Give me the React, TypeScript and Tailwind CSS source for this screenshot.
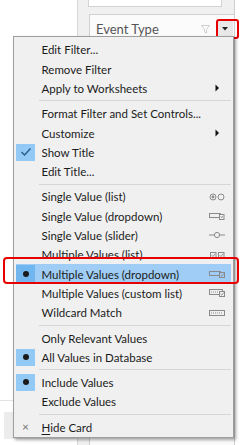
import React from "react";

const G = "#8a8a8a";

function IconSingleList() {
  return (
    <svg width="16" height="10" viewBox="0 0 16 10">
      <circle cx="4" cy="5" r="3" fill="none" stroke={G} strokeWidth="1" />
      <circle cx="4" cy="5" r="1.4" fill={G} />
      <circle cx="12" cy="5" r="3" fill="none" stroke={G} strokeWidth="1" />
    </svg>
  );
}
function IconSingleDropdown() {
  return (
    <svg width="16" height="10" viewBox="0 0 16 10">
      <rect x="0.5" y="2.5" width="11" height="4" fill="none" stroke={G} />
      <rect x="10.5" y="3.5" width="4.5" height="5" fill="#f0f0f0" stroke={G} />
      <path d="M11.8 5.2 L12.8 6.8 L13.8 5.2" fill="none" stroke={G} strokeWidth="0.8" />
    </svg>
  );
}
function IconSlider() {
  return (
    <svg width="16" height="10" viewBox="0 0 16 10">
      <line x1="0" y1="5" x2="16" y2="5" stroke={G} />
      <circle cx="8" cy="5" r="2.6" fill="#f0f0f0" stroke={G} />
    </svg>
  );
}
function IconMultiList() {
  return (
    <svg width="16" height="10" viewBox="0 0 16 10">
      <rect x="1.5" y="2.5" width="5.5" height="5.5" fill="none" stroke={G} />
      <path d="M2.8 5.2 L4 6.5 L6 3.8" fill="none" stroke={G} strokeWidth="0.9" />
      <rect x="9.5" y="2.5" width="5.5" height="5.5" fill="none" stroke={G} />
      <path d="M10.8 5.2 L12 6.5 L14 3.8" fill="none" stroke={G} strokeWidth="0.9" />
    </svg>
  );
}
function IconMultiDropdown({ bg = "#f0f0f0" }: { bg?: string }) {
  return (
    <svg width="16" height="10" viewBox="0 0 16 10">
      <rect x="0.5" y="2.5" width="11" height="4" fill="none" stroke={G} />
      <rect x="10.5" y="3.5" width="5" height="5" fill={bg} stroke={G} />
      <path d="M11.6 6 L12.8 7.2 L14.6 4.6" fill="none" stroke={G} strokeWidth="0.9" />
    </svg>
  );
}
function IconCustomList() {
  return (
    <svg width="16" height="10" viewBox="0 0 16 10">
      <rect x="0.5" y="1.5" width="13" height="5" fill="none" stroke={G} />
      <line x1="2" y1="4" x2="10" y2="4" stroke={G} strokeDasharray="1 1" />
      <rect x="10.5" y="3.5" width="5" height="5" fill="#f0f0f0" stroke={G} />
      <path d="M11.6 6 L12.8 7.2 L14.6 4.6" fill="none" stroke={G} strokeWidth="0.9" />
    </svg>
  );
}
function IconWildcard() {
  return (
    <svg width="16" height="10" viewBox="0 0 16 10">
      <rect x="0.5" y="2.5" width="15" height="5" fill="none" stroke={G} />
      <line x1="2" y1="5" x2="13" y2="5" stroke={G} strokeDasharray="1 1" />
    </svg>
  );
}
function Arrow() {
  return (
    <svg width="5" height="8" viewBox="0 0 5 8">
      <path d="M0.5 0.5 L4 4 L0.5 7.5 Z" fill="#111" />
    </svg>
  );
}

type Lead = "none" | "check" | "dot" | "x";

function Row({
  label,
  lead = "none",
  sel = false,
  right,
  highlight = false,
}: {
  label: React.ReactNode;
  lead?: Lead;
  sel?: boolean;
  right?: React.ReactNode;
  highlight?: boolean;
}) {
  return (
    <div
      className={`flex items-center h-[19.3px] ${highlight ? "bg-[#9fcdf5]" : ""}`}
    >
      <div className="w-[19px] h-full flex items-center justify-center shrink-0">
        <div
          className={`w-[19px] h-[17px] flex items-center justify-center ${
            highlight ? "bg-[#72b6f0]" : sel ? "bg-[#93c9f5]" : ""
          }`}
        >
          {lead === "dot" && <div className="w-[6px] h-[6px] rounded-full bg-[#1a1a1a]" />}
          {lead === "check" && (
            <svg width="12" height="10" viewBox="0 0 12 10">
              <path d="M1.5 5 L4.5 8 L10.5 1.5" fill="none" stroke="#2b5c8a" strokeWidth="1.4" />
            </svg>
          )}
          {lead === "x" && <span className="text-[12px] text-[#707070] leading-none">×</span>}
        </div>
      </div>
      <div className="ml-[6.5px] pt-[1px] flex-1 text-[11.5px] text-[#1b1b1b] leading-none whitespace-nowrap">
        {label}
      </div>
      <div className="w-[16px] mr-[6px] flex items-center justify-center">{right}</div>
    </div>
  );
}

function Sep() {
  return (
    <div className="h-[6px] flex items-center">
      <div className="ml-[23px] flex-1 h-px bg-[#d6d6d6]" />
    </div>
  );
}

export default function App() {
  return (
    <div
      className="relative w-[242px] h-[445px] overflow-hidden bg-white"
      style={{ fontFamily: 'Lato, "Noto Sans", sans-serif' }}
    >
      {/* background */}
      <div className="flex h-full">
        <div className="w-[77px] flex flex-col">
          <div className="h-[400px]" />
          <div className="h-px bg-[#e2e2e2]" />
          <div className="h-[11px]" />
          <div className="ml-[4px] h-[27px] bg-[#ececec]" />
        </div>
        <div className="w-px bg-[#d8d8d8]" />
        <div className="w-[157px] bg-[#f0f0f0] flex flex-col border-r border-[#cfcfcf]">
          <div className="ml-[10px] w-[134px] h-[7px] bg-white border-x border-b border-[#d2d2d2]" />
          <div className="h-[7px]" />
          <div className="ml-[11px] flex-1 bg-[#fbfbfb] border-t border-l border-[#d0d0d0]">
            <div className="flex items-center h-[28px] pl-[6px]">
              <span className="text-[13px] text-[#555] leading-none">Event Type</span>
              <div className="flex-1" />
              <svg width="9" height="9" viewBox="0 0 9 9" className="mr-[6px]">
                <path d="M0.5 0.5 H8.5 L5.5 4.5 V8 L3.5 7 V4.5 Z" fill="none" stroke="#c8c8c8" strokeWidth="0.9" />
              </svg>
              <div className="w-[17px] h-[16px] bg-[#e8e8e8] flex items-center justify-center mr-[1px]">
                <svg width="6" height="4" viewBox="0 0 6 4">
                  <path d="M0 0 H6 L3 3.5 Z" fill="#222" />
                </svg>
              </div>
            </div>
          </div>
        </div>
        <div className="flex-1 bg-white" />
      </div>

      {/* red box around dropdown button */}
      <div className="absolute left-[216px] top-[19px] w-[23px] h-[20px] border-2 border-[#e60000] rounded-[3px]" />

      {/* menu */}
      <div className="absolute left-[13px] top-[36px] w-[221px] h-[402px] bg-[#f0f0f0] border border-[#9e9e9e] shadow-[2px_2px_3px_rgba(0,0,0,0.35)] pt-[3px] px-[2px]">
        <Row label="Edit Filter..." />
        <Row label="Remove Filter" />
        <Row label="Apply to Worksheets" right={<Arrow />} />
        <Sep />
        <Row label="Format Filter and Set Controls..." />
        <Row label="Customize" right={<Arrow />} />
        <Row label="Show Title" lead="check" sel />
        <Row label="Edit Title..." />
        <Sep />
        <Row label="Single Value (list)" right={<IconSingleList />} />
        <Row label="Single Value (dropdown)" right={<IconSingleDropdown />} />
        <Row label="Single Value (slider)" right={<IconSlider />} />
        <Row label="Multiple Values (list)" right={<IconMultiList />} />
        <Row
          label="Multiple Values (dropdown)"
          lead="dot"
          highlight
          right={<IconMultiDropdown bg="#9fcdf5" />}
        />
        <Row label="Multiple Values (custom list)" right={<IconCustomList />} />
        <Row label="Wildcard Match" right={<IconWildcard />} />
        <Sep />
        <Row label="Only Relevant Values" />
        <Row label="All Values in Database" lead="dot" sel />
        <Sep />
        <Row label="Include Values" lead="dot" sel />
        <Row label="Exclude Values" />
        <Sep />
        <Row
          label={
            <span>
              <span className="underline underline-offset-2">H</span>ide Card
            </span>
          }
          lead="x"
        />
      </div>

      {/* red box around highlighted row */}
      <div className="absolute left-[3px] top-[257px] w-[236px] h-[27px] border-2 border-[#e60000] rounded-[4px]" />
    </div>
  );
}
